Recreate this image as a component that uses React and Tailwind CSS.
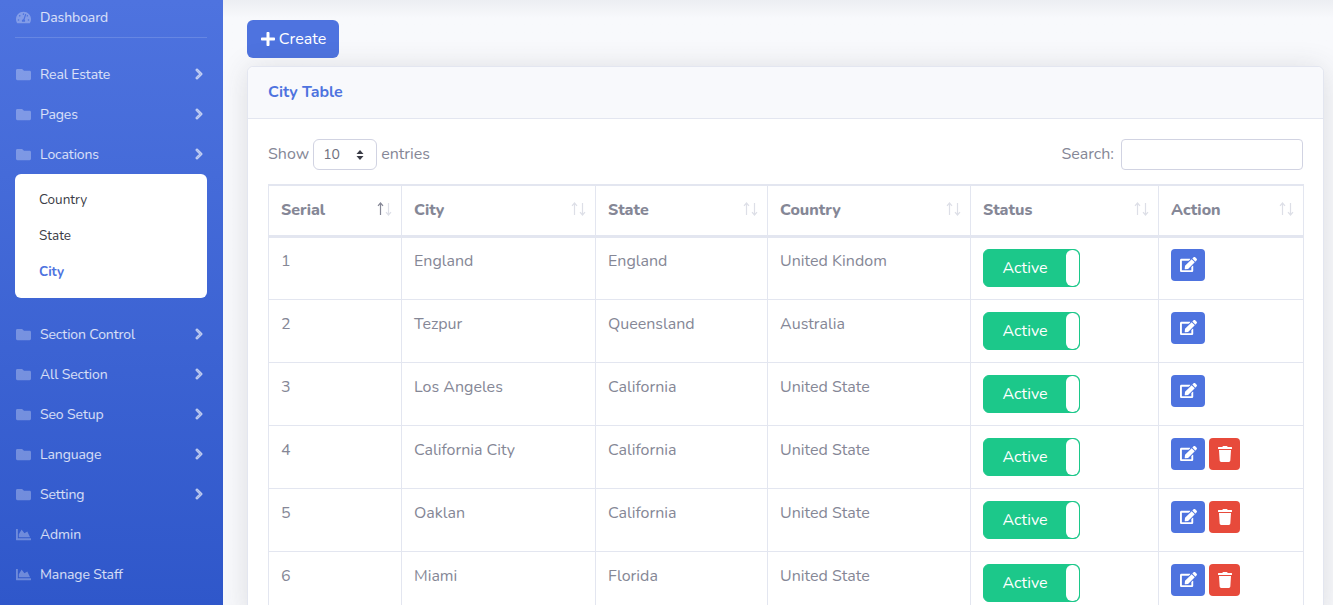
import React from "react";
import {
  FaChartArea,
  FaChevronRight,
  FaEdit,
  FaFolder,
  FaPlus,
  FaTachometerAlt,
  FaTrash,
} from "react-icons/fa";

const rows = [
  { id: 1, city: "England", state: "England", country: "United Kindom", canDelete: false },
  { id: 2, city: "Tezpur", state: "Queensland", country: "Australia", canDelete: false },
  { id: 3, city: "Los Angeles", state: "California", country: "United State", canDelete: false },
  { id: 4, city: "California City", state: "California", country: "United State", canDelete: true },
  { id: 5, city: "Oaklan", state: "California", country: "United State", canDelete: true },
  { id: 6, city: "Miami", state: "Florida", country: "United State", canDelete: true },
];

const columns = [
  { label: "Serial", width: "w-[133px]", active: true },
  { label: "City", width: "w-[194px]" },
  { label: "State", width: "w-[172px]" },
  { label: "Country", width: "w-[203px]" },
  { label: "Status", width: "w-[188px]" },
  { label: "Action", width: "w-[145px]" },
];

const NavItem = ({ label, icon: Icon = FaFolder, arrow = true }) => (
  <a className="flex h-10 items-center pl-[16px] pr-[18px] text-[14px] tracking-[-0.1px] text-white/80">
    <Icon className="mr-[9px] w-[15px] shrink-0 text-[15px] text-white/30" />
    <span>{label}</span>
    {arrow && (
      <FaChevronRight
        className="ml-auto text-[12px] text-white/50"
        stroke="currentColor"
        strokeWidth={50}
      />
    )}
  </a>
);

const Sidebar = () => (
  <aside className="h-[605px] w-[223px] shrink-0 bg-gradient-to-b from-[#4e73df] to-[#2f57ca]">
    <a className="flex h-[37px] items-center pb-[3px] pl-[16px] text-[14px] tracking-[-0.1px] text-white/80">
      <FaTachometerAlt className="mr-[9px] w-[15px] text-[15px] text-white/30" />
      <span>Dashboard</span>
    </a>
    <hr className="ml-[15px] mr-[16px] border-white/15" />
    <div className="pt-[16px]">
      <NavItem label="Real Estate" />
      <NavItem label="Pages" />
      <NavItem label="Locations" />
      <div className="mb-[16px] ml-[15px] mr-[16px] rounded-[6px] bg-white py-[8px] text-[13.5px] text-[#3a3b45]">
        <a className="flex h-9 items-center pl-[24px]">Country</a>
        <a className="flex h-9 items-center pl-[24px]">State</a>
        <a className="flex h-9 items-center pl-[24px] font-bold text-[#4e73df]">City</a>
      </div>
      <NavItem label="Section Control" />
      <NavItem label="All Section" />
      <NavItem label="Seo Setup" />
      <NavItem label="Language" />
      <NavItem label="Setting" />
      <NavItem label="Admin" icon={FaChartArea} arrow={false} />
      <NavItem label="Manage Staff" icon={FaChartArea} arrow={false} />
    </div>
  </aside>
);

// thin up/down pair drawn by hand, the glyphs in the fallback font are too heavy
const SortArrows = ({ active }) => (
  <svg
    className="absolute right-[9px] top-[16px]"
    width="15"
    height="14"
    viewBox="0 0 15 14"
    fill="none"
    strokeWidth="1.2"
  >
    <path d="M3.5 13V1M1 3.8 3.5 1 6 3.8" stroke={active ? "#858796" : "#dddfe7"} />
    <path d="M11.5 1v12M9 10.2 11.5 13 14 10.2" stroke="#dddfe7" />
  </svg>
);

const StatusToggle = () => (
  <div className="flex h-[38px] w-[97px] overflow-hidden rounded-[6px] border border-[#1cc88a] bg-[#1cc88a] text-white">
    <span className="flex flex-1 items-center justify-center">Active</span>
    <span className="w-[13px] rounded-[6px] bg-white" />
  </div>
);

const TableRow = ({ row }) => (
  <tr className="h-[63px] align-top [&:first-child>td]:pt-[11px]">
    <td className="border border-[#e3e6f0] px-[12px] pt-[12px]">{row.id}</td>
    <td className="border border-[#e3e6f0] px-[12px] pt-[12px]">{row.city}</td>
    <td className="border border-[#e3e6f0] px-[12px] pt-[12px]">{row.state}</td>
    <td className="border border-[#e3e6f0] px-[12px] pt-[12px]">{row.country}</td>
    <td className="border border-[#e3e6f0] px-[12px] pt-[12px]">
      <StatusToggle />
    </td>
    <td className="border border-[#e3e6f0] px-[12px] pt-[12px]">
      <div className="flex gap-[4px]">
        <button className="flex h-[32px] w-[34px] items-center justify-center rounded-[4px] bg-[#4e73df] text-[17px] text-white">
          <FaEdit />
        </button>
        {row.canDelete && (
          <button className="flex h-[32px] w-[31px] items-center justify-center rounded-[4px] bg-[#e74a3b] text-[16px] text-white">
            <FaTrash />
          </button>
        )}
      </div>
    </td>
  </tr>
);

export default function App() {
  return (
    <div className="flex h-[605px] overflow-hidden bg-[#f8f9fc] font-['Nunito','Lato','Noto_Sans',sans-serif] text-[16px] text-[#858796]">
      <Sidebar />
      <main className="min-w-0 flex-1 bg-gradient-to-b from-[#eceef2] to-[#f8f9fc] to-[18px] pl-[24px] pr-[9px] pt-[20px]">
        <button className="flex h-[38px] w-[92px] items-center justify-center gap-[3px] rounded-[6px] bg-[#4e73df] text-white">
          <FaPlus className="text-[16px]" />
          Create
        </button>
        <section className="mt-[8px] rounded-[6px] border border-[#e3e6f0] bg-white shadow-[0_2px_28px_rgba(58,59,69,0.15)]">
          <header className="flex h-[52px] items-center rounded-t-[6px] border-b border-[#e3e6f0] bg-[#f8f9fc] pb-[2px] pl-[20px] font-bold text-[#4e73df]">
            City Table
          </header>
          <div className="px-[20px] pt-[20px]">
            <div className="flex h-[31px] items-center justify-between">
              <label className="flex items-center gap-[4px] leading-[22px]">
                <span className="pb-[2px]">Show</span>
                <span className="flex h-[31px] w-[64px] items-center justify-between rounded-[6px] border border-[#d1d3e2] pl-[9px] pr-[12px] text-[14px] text-[#6e707e]">
                  10
                  <svg width="8" height="12" viewBox="0 0 8 12" fill="#3a3b45">
                    <path d="M4 1 7.5 5H.5zM4 11 .5 7h7z" />
                  </svg>
                </span>
                <span className="pb-[2px]">entries</span>
              </label>
              <label className="flex items-center gap-[7px]">
                <span className="pb-[2px]">Search:</span>
                <input className="h-[31px] w-[182px] rounded-[4px] border border-[#d1d3e2] bg-white" />
              </label>
            </div>
            <table className="mt-[14px] w-[1035px] table-fixed border-collapse">
              <thead>
                <tr className="h-[51px] border-t-2 border-[#e3e6f0]">
                  {columns.map((col) => (
                    <th
                      key={col.label}
                      className={`${col.width} relative border border-b-[3px] border-[#e3e6f0] px-[12px] text-left font-extrabold`}
                    >
                      {col.label}
                      <SortArrows active={col.active} />
                    </th>
                  ))}
                </tr>
              </thead>
              <tbody>
                {rows.map((row) => (
                  <TableRow key={row.id} row={row} />
                ))}
              </tbody>
            </table>
          </div>
        </section>
      </main>
    </div>
  );
}
